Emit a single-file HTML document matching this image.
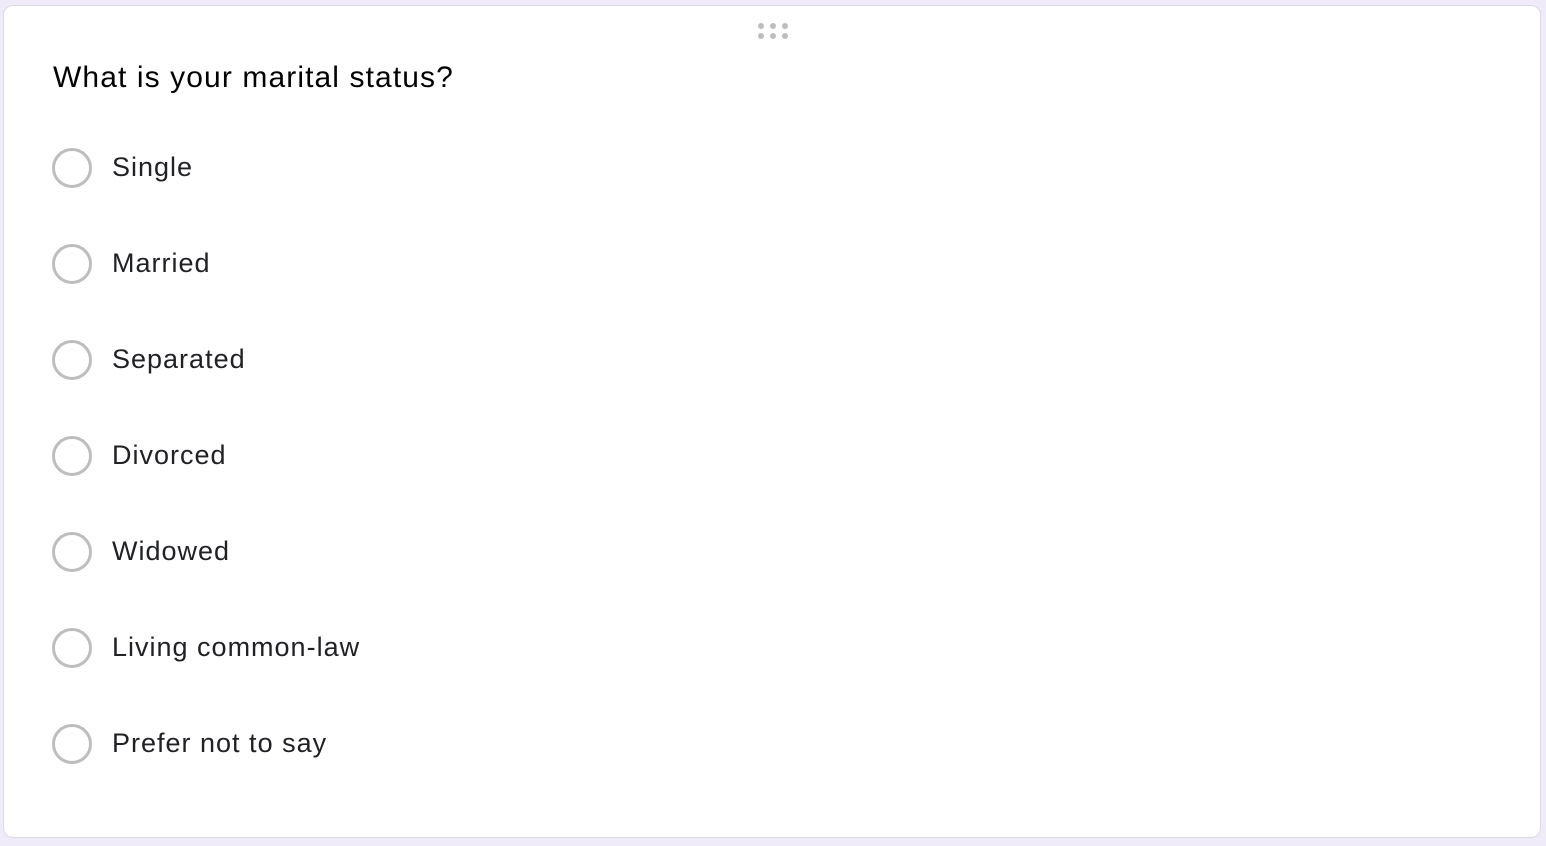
<!DOCTYPE html>
<html><head><style>
html,body{margin:0;padding:0;width:1546px;height:846px;background:#f0ebf8;overflow:hidden;font-family:"Liberation Sans",sans-serif;}
.card{position:absolute;left:3px;top:5px;width:1536px;height:831px;background:#fff;border:1px solid #dadce0;border-radius:10px;}
.dot{position:absolute;width:6px;height:6px;border-radius:50%;background:#bdbdbd;}
.title{position:absolute;left:49px;top:55px;font-size:30px;color:#000;letter-spacing:1.1px;}
.opt{position:absolute;left:48px;height:40px;}
.opt .r{position:absolute;left:0;top:0;width:34px;height:34px;border:3px solid #bdbdbd;border-radius:50%;}
.opt .t{position:absolute;left:60px;top:3px;font-size:27px;color:#202124;white-space:nowrap;line-height:32px;letter-spacing:1px;}
</style></head><body>
<div class="card">
<div class="dot" style="left:754px;top:17px"></div><div class="dot" style="left:766px;top:17px"></div><div class="dot" style="left:778px;top:17px"></div>
<div class="dot" style="left:754px;top:27px"></div><div class="dot" style="left:766px;top:27px"></div><div class="dot" style="left:778px;top:27px"></div>
<div class="title">What is your marital status?</div>
<div class="opt" style="top:142px"><div class="r"></div><div class="t">Single</div></div>
<div class="opt" style="top:238px"><div class="r"></div><div class="t">Married</div></div>
<div class="opt" style="top:334px"><div class="r"></div><div class="t">Separated</div></div>
<div class="opt" style="top:430px"><div class="r"></div><div class="t">Divorced</div></div>
<div class="opt" style="top:526px"><div class="r"></div><div class="t">Widowed</div></div>
<div class="opt" style="top:622px"><div class="r"></div><div class="t">Living common-law</div></div>
<div class="opt" style="top:718px"><div class="r"></div><div class="t">Prefer not to say</div></div>
</div>
</body></html>
